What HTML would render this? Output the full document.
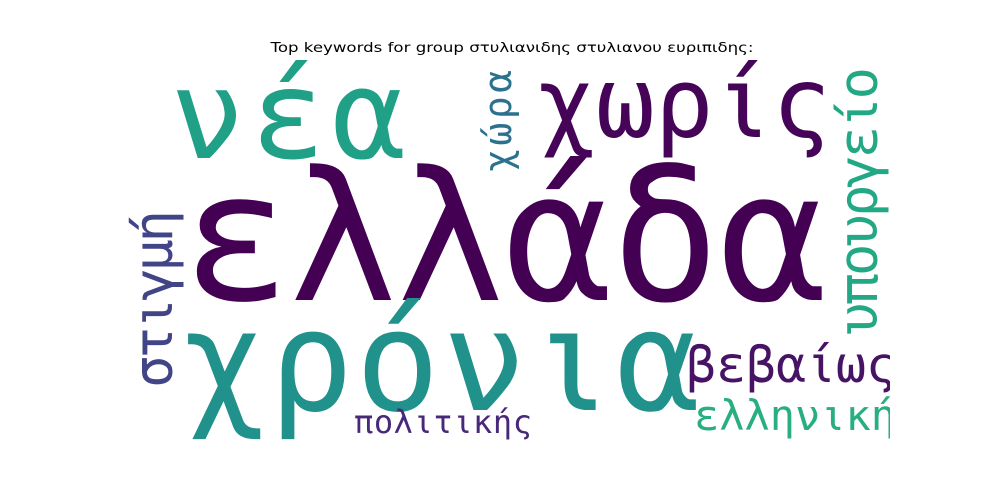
<!DOCTYPE html>
<html><head><meta charset="utf-8"><style>
html,body{margin:0;padding:0;background:#fff;width:1000px;height:500px;overflow:hidden}
svg{display:block}
text{font-family:"DejaVu Sans Mono","Liberation Mono",monospace}
</style></head><body>
<svg width="1000" height="500" viewBox="0 0 1000 500" xmlns="http://www.w3.org/2000/svg">
<defs><clipPath id="c"><rect x="120" y="60" width="770" height="384"/></clipPath></defs>
<text x="512" y="52" text-anchor="middle" font-size="13.5" style="font-family:'DejaVu Sans','Liberation Sans',sans-serif" fill="#000" textLength="483" lengthAdjust="spacingAndGlyphs">Top keywords for group στυλιανιδης στυλιανου ευριπιδης:</text>
<g clip-path="url(#c)">
<text x="182" y="300" font-size="180" fill="#440154" textLength="645" lengthAdjust="spacing">ελλάδα</text>
<text x="170" y="158" font-size="124" fill="#20a087" textLength="236" lengthAdjust="spacing">νέα</text>
<text x="537" y="137" font-size="98" fill="#450457" textLength="294" lengthAdjust="spacing">χωρίς</text>
<text x="182" y="410" font-size="140" fill="#21918c" textLength="518" lengthAdjust="spacing">χρόνια</text>
<text x="686" y="382" font-size="50" fill="#471365" textLength="210" lengthAdjust="spacing">βεβαίως</text>
<text x="694" y="430" font-size="42" fill="#28ae80" textLength="202" lengthAdjust="spacing">ελληνική</text>
<text x="354" y="433" font-size="32" fill="#482878" textLength="178" lengthAdjust="spacing">πολιτικής</text>
<text transform="translate(172,388) rotate(-90)" font-size="54" fill="#414487" textLength="178" lengthAdjust="spacing">στιγμή</text>
<text transform="translate(511,172) rotate(-90)" font-size="38" fill="#2c728e" textLength="102" lengthAdjust="spacing">χώρα</text>
<text transform="translate(877,335) rotate(-90)" font-size="54" fill="#22a884" textLength="268" lengthAdjust="spacing">υπουργείο</text>
</g>
</svg>
</body></html>
